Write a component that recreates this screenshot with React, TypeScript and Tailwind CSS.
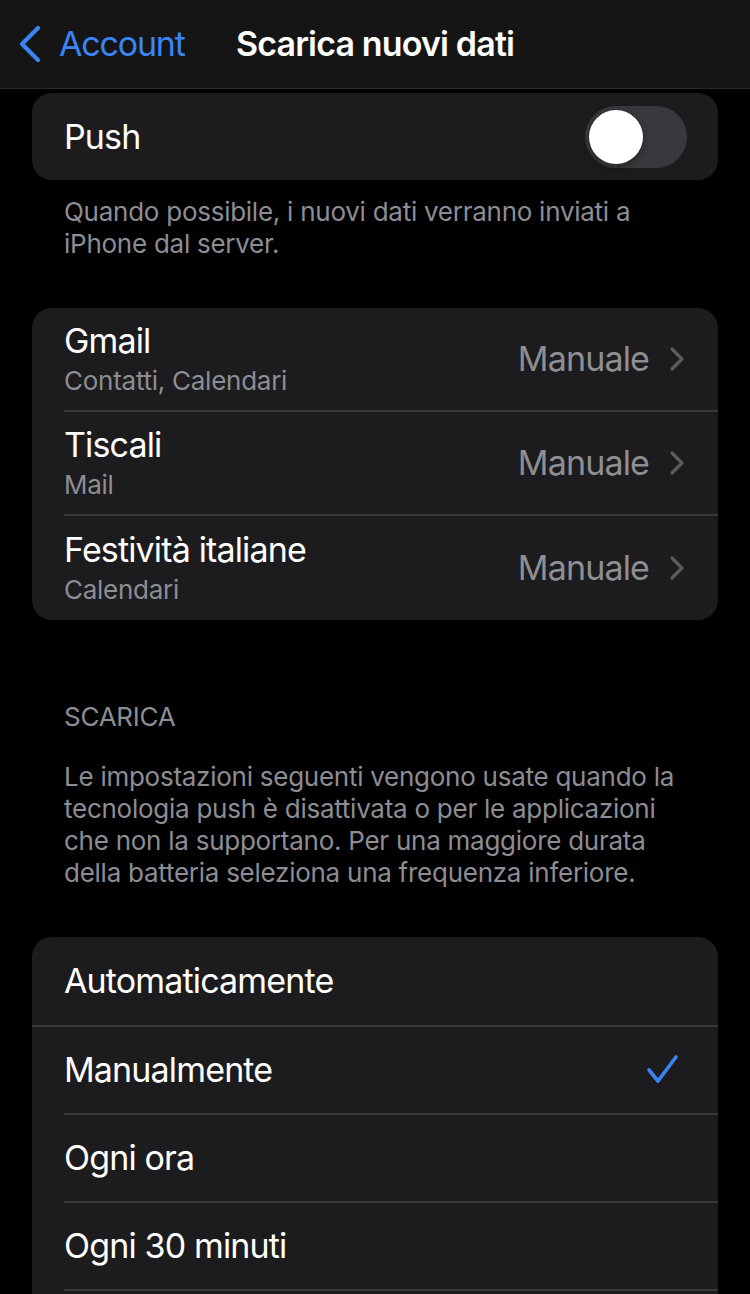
import React from "react";

const font = { fontFamily: "Inter, 'Noto Sans', sans-serif" };

function Chevron() {
  return (
    <svg width="16" height="26" viewBox="0 0 16 26" className="shrink-0">
      <path d="M3 3 L13 13 L3 23" fill="none" stroke="#5b5b5f" strokeWidth="3.2" strokeLinecap="round" strokeLinejoin="round" />
    </svg>
  );
}

function AccountRow({ title, sub, last }: { title: string; sub: string; last?: boolean }) {
  return (
    <div className="flex h-[104px] pl-[32px]">
      <div className={`flex flex-1 items-center justify-between pr-[33px] ${last ? "" : "border-b-2 border-[#38383a]"}`}>
        <div className="flex flex-col">
          <span className="text-[34px] leading-[40px] text-white tracking-[-0.025em]">{title}</span>
          <span className="mt-[4px] text-[26px] leading-[32px] text-[#8d8d93] tracking-[-0.01em]">{sub}</span>
        </div>
        <div className="flex items-center gap-[20px]">
          <span className="text-[34px] leading-[40px] text-[#8e8e93] tracking-[-0.025em]">Manuale</span>
          <Chevron />
        </div>
      </div>
    </div>
  );
}

function OptionRow({ label, checked, divider }: { label: string; checked?: boolean; divider?: boolean }) {
  return (
    <div className="flex h-[88px] pl-[32px]">
      <div className={`flex flex-1 items-center justify-between pr-[38px] ${divider ? "border-b-2 border-[#38383a]" : ""}`}>
        <span className="text-[34px] leading-[40px] text-white tracking-[-0.025em]">{label}</span>
        {checked && (
          <svg width="34" height="32" viewBox="0 0 34 32">
            <path d="M3 16 L12 27 L30 3" fill="none" stroke="#3a84f6" strokeWidth="3.6" strokeLinecap="round" strokeLinejoin="round" />
          </svg>
        )}
      </div>
    </div>
  );
}

export default function App() {
  return (
    <div className="w-[750px] h-[1294px] overflow-hidden bg-black" style={font}>
      <div className="grid h-[89px] grid-cols-[1fr_auto_1fr] items-center border-b border-[#2a2a2a] bg-[#151515]">
        <div className="flex items-center gap-[17px] pl-[18px]">
          <svg width="24" height="38" viewBox="0 0 24 38">
            <path d="M20 3 L4 19 L20 35" fill="none" stroke="#3a84f6" strokeWidth="4.2" strokeLinecap="round" strokeLinejoin="round" />
          </svg>
          <span className="text-[34px] leading-[40px] text-[#3a84f6] tracking-[-0.035em]">Account</span>
        </div>
        <span className="text-[34px] leading-[40px] font-semibold text-white tracking-[-0.025em]">Scarica nuovi dati</span>
        <div />
      </div>

      <div className="px-[32px]">
        <div className="mt-[4px] flex h-[87px] items-center justify-between rounded-[20px] bg-[#1c1c1e] pl-[32px] pr-[31px]">
          <span className="text-[34px] leading-[40px] text-white tracking-[-0.025em]">Push</span>
          <div className="flex h-[62px] w-[102px] items-center rounded-full bg-[#39393d] pl-[4px]">
            <div className="h-[54px] w-[54px] rounded-full bg-white shadow-[0_3px_8px_rgba(0,0,0,0.35)]" />
          </div>
        </div>

        <p className="mt-[16px] whitespace-nowrap px-[32px] text-[26px] leading-[32px] text-[#8d8d93] tracking-[-0.01em]">
          Quando possibile, i nuovi dati verranno inviati a<br />iPhone dal server.
        </p>

        <div className="mt-[48px] overflow-hidden rounded-[20px] bg-[#1c1c1e]">
          <AccountRow title="Gmail" sub="Contatti, Calendari" />
          <AccountRow title="Tiscali" sub="Mail" />
          <AccountRow title="Festività italiane" sub="Calendari" last />
        </div>

        <p className="mt-[81px] px-[32px] text-[26px] leading-[32px] text-[#8d8d93] tracking-[-0.01em]">SCARICA</p>
        <p className="mt-[28px] whitespace-nowrap px-[32px] text-[26px] leading-[32px] text-[#8d8d93] tracking-[-0.01em]">
          Le impostazioni seguenti vengono usate quando la<br />
          tecnologia push è disattivata o per le applicazioni<br />
          che non la supportano. Per una maggiore durata<br />
          della batteria seleziona una frequenza inferiore.
        </p>

        <div className="mt-[48px] rounded-t-[20px] bg-[#1c1c1e]">
          <div className="flex h-[90px] items-center border-b-2 border-[#3a3a3c] pl-[32px]">
            <span className="text-[34px] leading-[40px] text-white tracking-[-0.025em]">Automaticamente</span>
          </div>
          <OptionRow label="Manualmente" checked divider />
          <OptionRow label="Ogni ora" divider />
          <OptionRow label="Ogni 30 minuti" divider />
          <div className="h-[88px]" />
        </div>
      </div>
    </div>
  );
}
